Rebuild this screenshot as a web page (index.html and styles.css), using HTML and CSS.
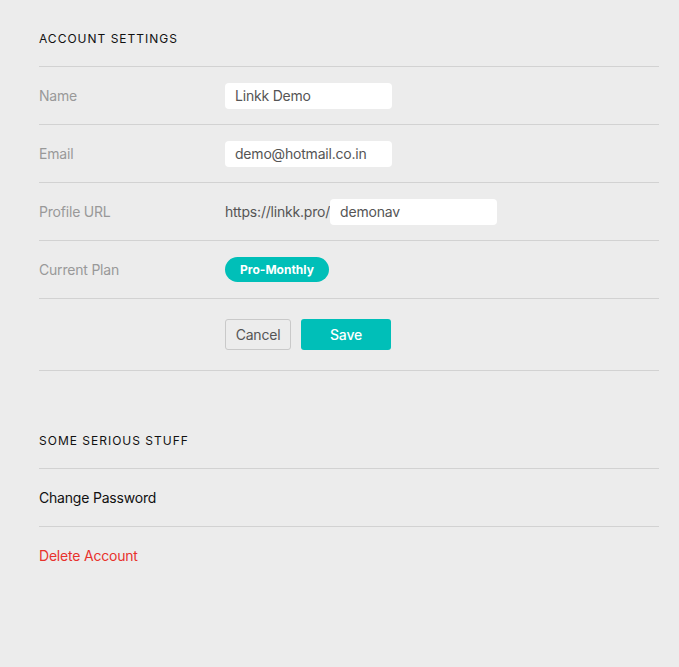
FILE: index.html
```html
<!DOCTYPE html>
<html>
<head>
<meta charset="utf-8">
<link rel="stylesheet" href="styles.css">
</head>
<body>
<div class="page">
  <section class="section">
    <h2 class="section-title">Account Settings</h2>
    <div class="row">
      <div class="label">Name</div>
      <div class="field"><input class="input" type="text" value="Linkk Demo"></div>
    </div>
    <div class="row">
      <div class="label">Email</div>
      <div class="field"><input class="input" type="text" value="demo@hotmail.co.in"></div>
    </div>
    <div class="row">
      <div class="label">Profile URL</div>
      <div class="field"><span class="prefix">https://linkk.pro/</span><input class="input" type="text" value="demonav"></div>
    </div>
    <div class="row">
      <div class="label">Current Plan</div>
      <div class="field"><span class="badge">Pro-Monthly</span></div>
    </div>
    <div class="row row-actions">
      <div class="label"></div>
      <div class="field actions">
        <button class="btn btn-cancel">Cancel</button>
        <button class="btn btn-save">Save</button>
      </div>
    </div>
  </section>
  <section class="section section-serious">
    <h2 class="section-title">Some Serious Stuff</h2>
    <div class="row"><span class="link">Change Password</span></div>
    <div class="row row-last"><span class="link link-danger">Delete Account</span></div>
  </section>
</div>
</body>
</html>
```
FILE: styles.css
```css
* { box-sizing: border-box; }
html, body { margin: 0; padding: 0; }
body {
  background: #ececec;
  font-family: Inter, "Noto Sans", "Liberation Sans", sans-serif;
  color: #111;
  width: 679px;
  height: 667px;
  overflow: hidden;
}
.page {
  padding: 0 20px 0 39px;
}
.section-title {
  margin: 0;
  padding: 31px 0 19px;
  font-size: 12px;
  line-height: 16px;
  font-weight: 400;
  text-transform: uppercase;
  letter-spacing: 1px;
  color: #111;
  border-bottom: 1px solid #d2d2d2;
}
.section-serious { margin-top: 31px; }
.row {
  display: flex;
  align-items: center;
  height: 58px;
  border-bottom: 1px solid #d2d2d2;
}
.row-actions { height: 72px; }
.row-last { border-bottom: none; padding-bottom: 1px; }
.label {
  width: 186px;
  flex: none;
  font-size: 14px;
  letter-spacing: -0.2px;
  color: #999;
}
.field {
  display: flex;
  align-items: center;
}
.input {
  width: 167px;
  height: 26px;
  border: none;
  border-radius: 4px;
  background: #fff;
  padding: 0 10px;
  font-family: inherit;
  font-size: 14px;
  letter-spacing: -0.2px;
  color: #555;
  outline: none;
}
.prefix {
  font-size: 14px;
  letter-spacing: -0.2px;
  color: #555;
}
.badge {
  display: inline-block;
  width: 104px;
  height: 25px;
  line-height: 25px;
  border-radius: 13px;
  background: #00bfb8;
  color: #fff;
  font-size: 12px;
  font-weight: 700;
  text-align: center;
}
.actions { gap: 10px; }
.btn {
  height: 31px;
  border-radius: 3px;
  font-family: inherit;
  font-size: 14px;
  letter-spacing: -0.2px;
  cursor: pointer;
}
.btn-cancel {
  width: 66px;
  background: #ececec;
  border: 1px solid #c9c9c9;
  color: #555;
}
.btn-save {
  width: 90px;
  background: #00bfb8;
  border: none;
  color: #fff;
  font-weight: 500;
}
.link {
  font-size: 14px;
  letter-spacing: -0.2px;
  color: #111;
}
.link-danger { color: #e8322c; }
```
